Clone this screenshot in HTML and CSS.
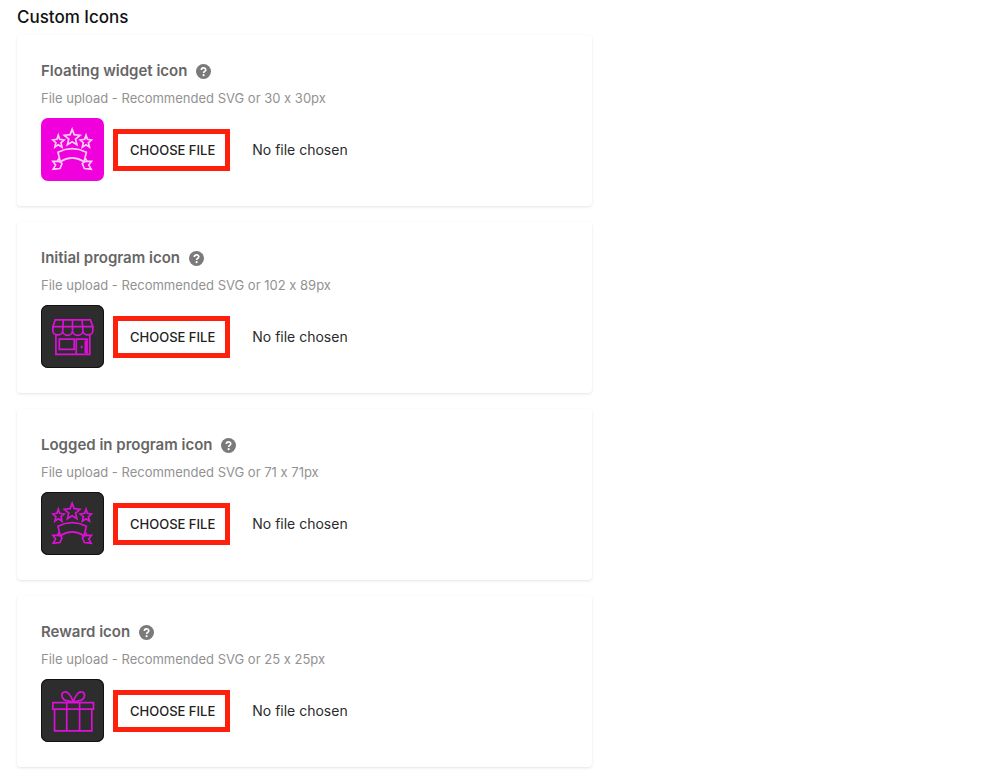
FILE: index.html
```html
<!DOCTYPE html>
<html lang="en">
<head>
    <meta charset="UTF-8">
    <meta name="viewport" content="width=device-width, initial-scale=1.0">
    <title>Custom Icons</title>
    <link rel="stylesheet" href="styles.css">
</head>
<body>

    <!-- shared shapes -->
    <svg class="sprite" aria-hidden="true">
        <symbol id="help" viewBox="0 0 14 14">
            <circle cx="7" cy="7" r="7" fill="currentColor"/>
            <path d="M5 5.6C5 2.9 9.1 3 9.1 5.4C9.1 6.9 7.1 6.8 7.1 8.4" fill="none" stroke="#fff" stroke-width="1.6"/>
            <circle cx="7.1" cy="10.4" r="1" fill="#fff"/>
        </symbol>
        <symbol id="banner" viewBox="18 18 186 186">
            <path d="M110 51L116 67L133 69L120 80L124 97L110 88L96 97L100 80L87 69L104 67Z"/>
            <path d="M69 69L73 81L86 83L77 91L80 104L69 97L59 104L62 91L53 83L65 81Z"/>
            <path d="M151 69L155 81L167 83L158 91L161 104L151 97L140 104L143 91L134 83L147 81Z"/>
            <path d="M68 119Q110 98 152 119L145 147Q110 125 75 147Z"/>
            <path d="M71 137L66 146L53 146L61 157L54 169L74 167L80 153L75 147L66 146"/>
            <path d="M149 137L154 146L167 146L159 157L166 169L146 167L140 153L145 147L154 146"/>
        </symbol>
        <symbol id="store" viewBox="18 18 186 186">
            <path d="M60 62H164L171 82H53Z"/>
            <path d="M53 82V94C53 110 82 110 82 94C82 112 111 112 111 94C111 112 142 112 142 94C142 110 171 110 171 94V82"/>
            <path d="M84 62L82 94M111 62V94M139 62L142 94"/>
            <path d="M62 106V164H162V106"/>
            <path d="M72 119H116V149H72Z"/>
            <path d="M122 164V119H154V164M149 123V160M138 138V146"/>
        </symbol>
        <symbol id="gift" viewBox="18 18 186 186">
            <path d="M53 88H173V107H53Z"/>
            <path d="M58 107V171H168V107M94 88V171M132 88V171"/>
            <path d="M113 86C107 66 96 52 85 57C74 63 81 80 94 82L113 86C119 66 130 52 141 57C152 63 145 80 132 82Z"/>
        </symbol>
    </svg>

    <main class="settings">
        <h1>Custom Icons</h1>

        <section class="card">
            <div class="card-title">
                <label for="widget-icon">Floating widget icon</label>
                <button type="button" class="help" aria-label="Help"><svg><use href="#help"/></svg></button>
            </div>
            <p class="hint">File upload - Recommended SVG or 30 x 30px</p>
            <div class="upload">
                <svg class="preview preview-pink"><use href="#banner"/></svg>
                <input type="file" id="widget-icon">
            </div>
        </section>

        <section class="card">
            <div class="card-title">
                <label for="initial-icon">Initial program icon</label>
                <button type="button" class="help" aria-label="Help"><svg><use href="#help"/></svg></button>
            </div>
            <p class="hint">File upload - Recommended SVG or 102 x 89px</p>
            <div class="upload">
                <svg class="preview"><use href="#store"/></svg>
                <input type="file" id="initial-icon">
            </div>
        </section>

        <section class="card">
            <div class="card-title">
                <label for="logged-icon">Logged in program icon</label>
                <button type="button" class="help" aria-label="Help"><svg><use href="#help"/></svg></button>
            </div>
            <p class="hint">File upload - Recommended SVG or 71 x 71px</p>
            <div class="upload">
                <svg class="preview"><use href="#banner"/></svg>
                <input type="file" id="logged-icon">
            </div>
        </section>

        <section class="card">
            <div class="card-title">
                <label for="reward-icon">Reward icon</label>
                <button type="button" class="help" aria-label="Help"><svg><use href="#help"/></svg></button>
            </div>
            <p class="hint">File upload - Recommended SVG or 25 x 25px</p>
            <div class="upload">
                <svg class="preview"><use href="#gift"/></svg>
                <input type="file" id="reward-icon">
            </div>
        </section>
    </main>

</body>
</html>
```
FILE: styles.css
```css
* { box-sizing: border-box; }
body { margin: 0; background: #fff; color: #222; font-family: Inter, "Liberation Sans", sans-serif; font-feature-settings: "calt" 0; }
h1 { margin: 0; font-size: 17px; line-height: 20px; font-weight: 500; color: #111; }
.sprite { display: none; }
.settings { display: flex; flex-direction: column; gap: 16px; max-width: 609px; padding: 7px 17px; }
.settings h1 { margin-bottom: -8px; }
.card { padding: 24px 24px 25px; border-radius: 4px; background: #fff; box-shadow: 0 1px 3px rgba(0, 0, 0, 0.11); }
.card-title { display: flex; align-items: center; gap: 9px; font-size: 15px; line-height: 24px; font-weight: 600; color: #666; }
.help { width: 15px; height: 15px; padding: 0; border: 0; background: none; color: #7a7a7a; cursor: pointer; }
.help svg { display: block; width: 15px; height: 15px; }
.hint { margin: 5px 0 10px; font-size: 13px; line-height: 20px; color: #929292; }
.upload { display: flex; align-items: center; gap: 9px; }
.preview { flex: none; width: 63px; height: 63px; border-radius: 7px; background: #2d2d2d; box-shadow: inset 0 0 0 1px #111; fill: none; stroke: #dc10d6; stroke-width: 5; }
.preview-pink { background: #f000dc; box-shadow: none; stroke: #ffd0fa; }
input[type="file"] { flex: 1; min-width: 0; font-family: inherit; font-size: 14px; color: #2b2b2b; }
input[type="file"]::file-selector-button { height: 42px; margin: 0 22px 0 0; padding: 0 10px 0 12px; border: 5px solid #ff1f0d; border-radius: 0; background: #fff; color: #222; font-family: inherit; font-size: 13px; font-weight: 500; text-transform: uppercase; cursor: pointer; }
```
